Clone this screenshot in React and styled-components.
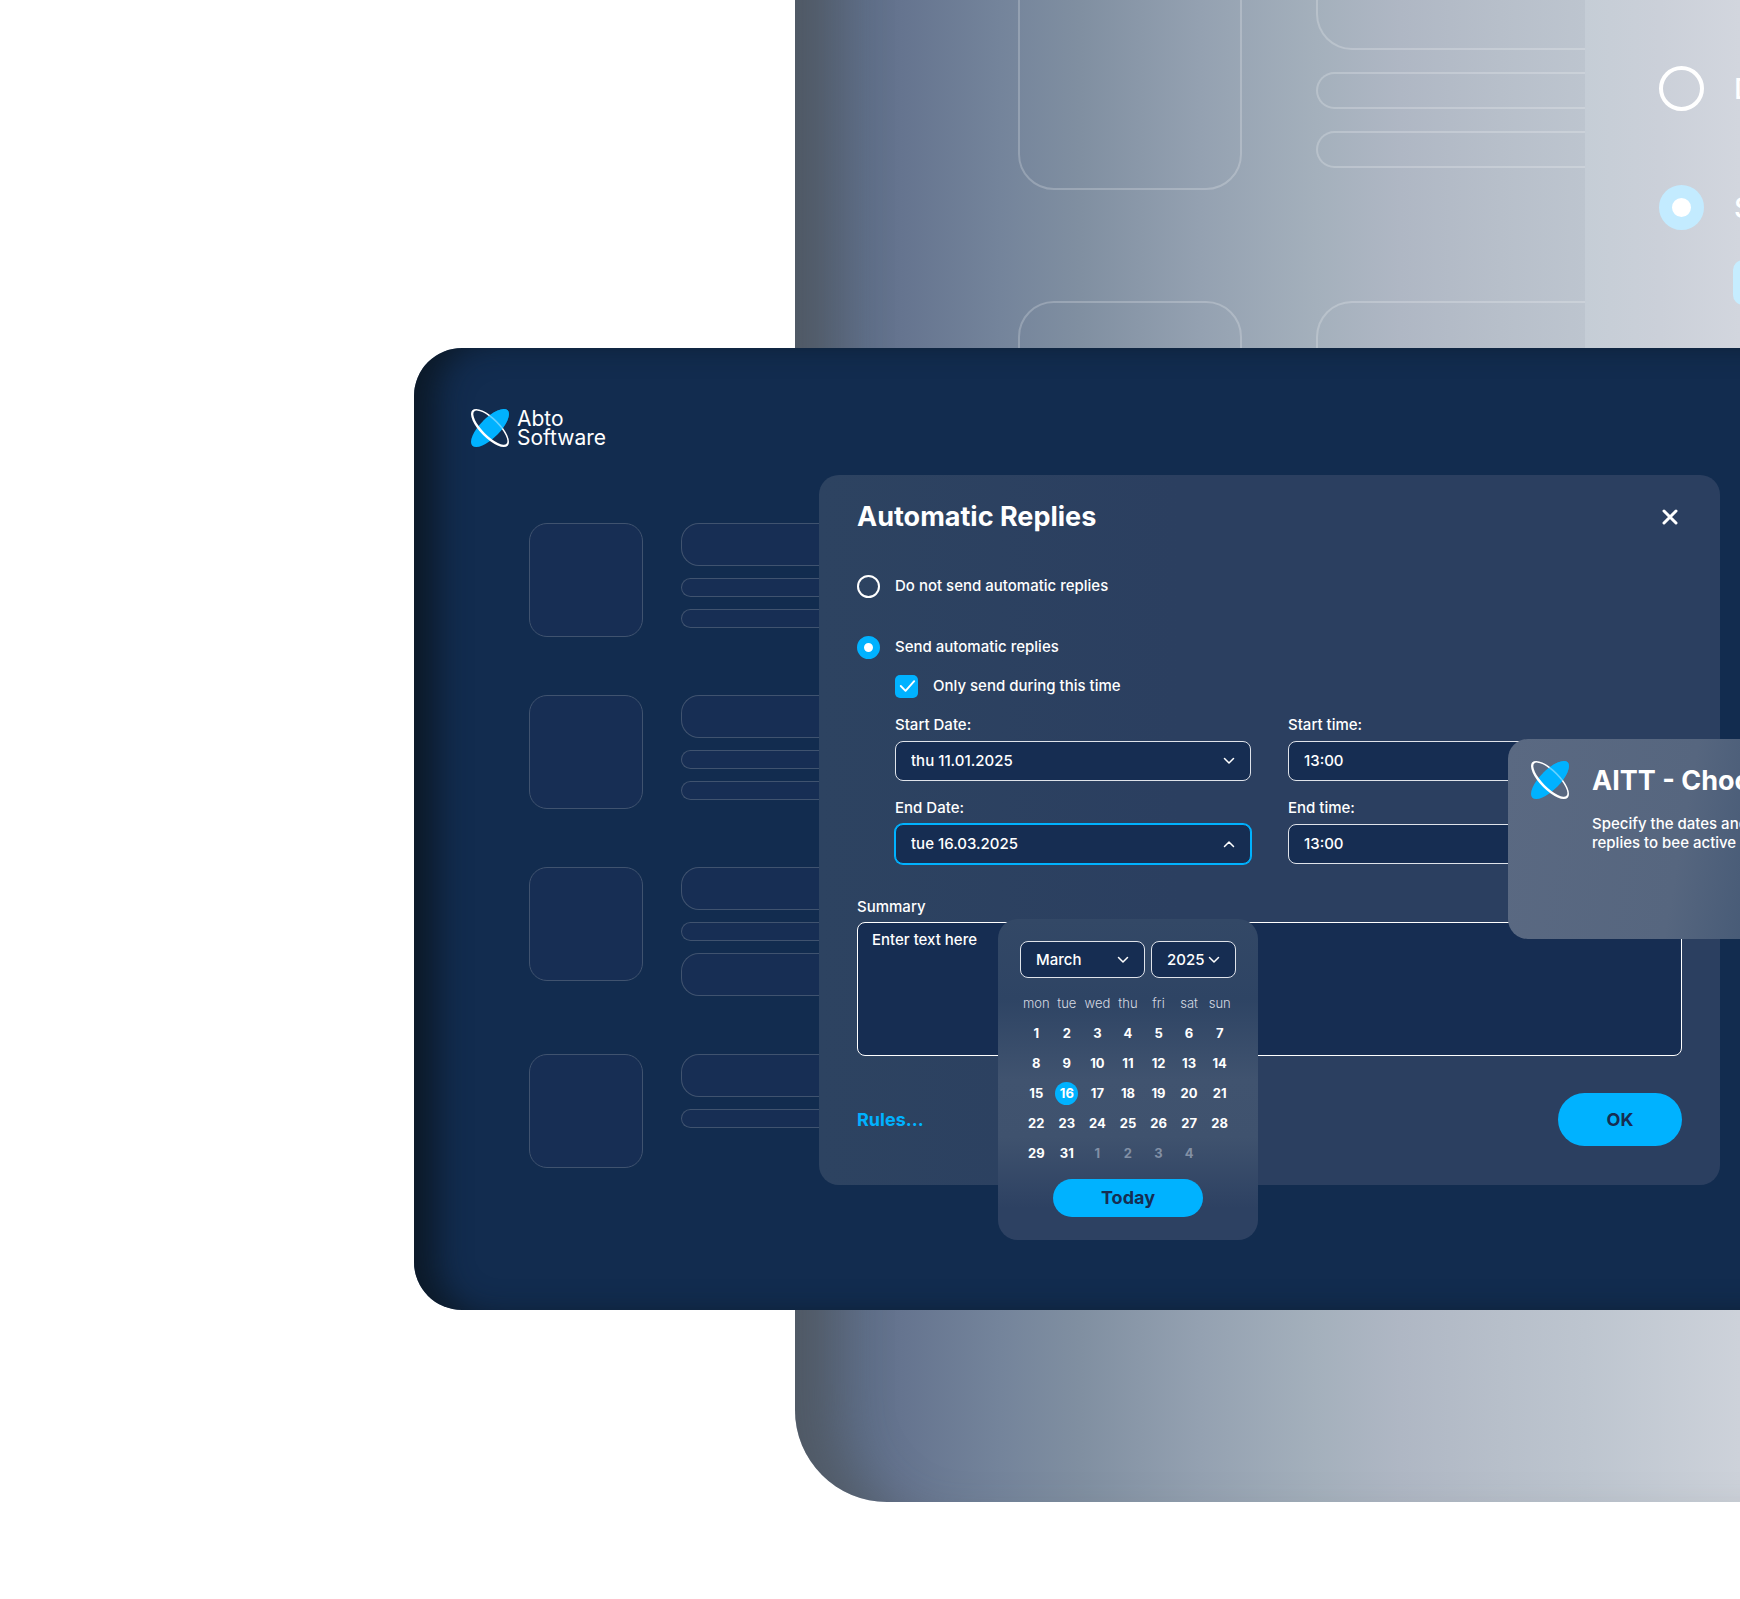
import { useId, useState } from 'react';
import styled, { createGlobalStyle, css } from 'styled-components';

const ROWS = [
  ['tall', 'thin', 'thin'],
  ['tall', 'thin', 'thin'],
  ['tall', 'thin', 'tall'],
  ['tall', 'thin'],
];

const WEEKDAYS = ['mon', 'tue', 'wed', 'thu', 'fri', 'sat', 'sun'];

const WEEKS = [
  [1, 2, 3, 4, 5, 6, 7],
  [8, 9, 10, 11, 12, 13, 14],
  [15, 16, 17, 18, 19, 20, 21],
  [22, 23, 24, 25, 26, 27, 28],
  [29, 31],
];

const NEXT_MONTH = [1, 2, 3, 4];

const LogoMark = () => {
  const clipId = useId();

  return (
    <Mark viewBox="0 0 38 38" aria-hidden="true">
      <clipPath id={clipId}>
        <path d="M0 0H38V38Z" />
      </clipPath>
      <ellipse cx="19" cy="19" rx="25" ry="9.8" transform="rotate(-45 19 19)" fill="#00b2ff" />
      <path
        transform="rotate(45 19 19)"
        fill="#fff"
        fillRule="evenodd"
        d="M-6 19a25 9.8 0 1 0 50 0a25 9.8 0 1 0 -50 0ZM-3.8 18.5a22.8 7.8 0 1 1 45.6 0a22.8 7.8 0 1 1 -45.6 0Z"
      />
      <g clipPath={`url(#${clipId})`}>
        <ellipse
          cx="19"
          cy="19"
          rx="25"
          ry="9.8"
          transform="rotate(-45 19 19)"
          fill="#00b2ff"
          opacity="0.6"
        />
      </g>
    </Mark>
  );
};

const Skeleton = ({ large }) => (
  <SkeletonList $large={large} aria-hidden="true">
    {ROWS.map((bars, index) => (
      <SkeletonRow key={index} $large={large}>
        <Thumb $large={large} />
        <Bars $large={large}>
          {bars.map((kind, i) => (
            <Bar key={i} $large={large} $tall={kind === 'tall'} />
          ))}
        </Bars>
      </SkeletonRow>
    ))}
  </SkeletonList>
);

const Check = ({ large, ...props }) => (
  <CheckWrap>
    <CheckInput type="checkbox" $large={large} {...props} />
    <CheckMark viewBox="0 0 24 24" $large={large} aria-hidden="true">
      <path d="M6 11.5L11 16.5L20 6.5" />
    </CheckMark>
  </CheckWrap>
);

const Select = ({ options, open, height, pad = 16, ...props }) => (
  <SelectWrap>
    <SelectInput $open={open} $height={height} {...props}>
      {options.map((option) => (
        <option key={option}>{option}</option>
      ))}
    </SelectInput>
    <Chevron viewBox="0 0 12 8" $pad={pad} aria-hidden="true">
      <path d={open ? 'M1.5 6.5L6 2L10.5 6.5' : 'M1.5 1.5L6 6L10.5 1.5'} />
    </Chevron>
  </SelectWrap>
);

const Calendar = () => {
  const [day, setDay] = useState(16);

  return (
    <CalendarBox>
      <CalendarHead>
        <Select aria-label="Month" options={['March']} height={37} />
        <Select aria-label="Year" options={['2025']} height={37} />
      </CalendarHead>
      <Days>
        <thead>
          <tr>
            {WEEKDAYS.map((name) => (
              <Weekday key={name}>{name}</Weekday>
            ))}
          </tr>
        </thead>
        <tbody>
          {WEEKS.map((week) => (
            <tr key={week[0]}>
              {week.map((n) => (
                <DayCell key={n}>
                  <Day type="button" $selected={n === day} onClick={() => setDay(n)}>
                    {n}
                  </Day>
                </DayCell>
              ))}
              {week.length < 7 &&
                NEXT_MONTH.map((n) => (
                  <DayCell key={`next-${n}`}>
                    <Day type="button" $muted>
                      {n}
                    </Day>
                  </DayCell>
                ))}
            </tr>
          ))}
        </tbody>
      </Days>
      <Today type="button" onClick={() => setDay(16)}>
        Today
      </Today>
    </CalendarBox>
  );
};

const BackWindow = () => (
  <BackFrame>
    <Skeleton large />
    <BackPanel>
      <BackOption>
        <RadioInput type="radio" name="back-replies" $large />
        Do not send automatic replies
      </BackOption>
      <BackOption>
        <RadioInput type="radio" name="back-replies" $large defaultChecked />
        Send automatic replies
      </BackOption>
      <BackOption $nested>
        <Check large defaultChecked />
        Only send during this time
      </BackOption>
    </BackPanel>
  </BackFrame>
);

const App = () => {
  const [mode, setMode] = useState('send');

  return (
    <Page>
      <GlobalStyle />
      <BackWindow />
      <FrontWindow>
        <Brand href="#">
          <LogoMark />
          <BrandName>
            Abto
            <br />
            Software
          </BrandName>
        </Brand>
        <Content>
          <Skeleton />
          <Dialog>
            <DialogHead>
              <Title>Automatic Replies</Title>
              <Close type="button" aria-label="Close">
                <svg viewBox="0 0 16 16" width="16" height="16">
                  <path d="M2 2L14 14M14 2L2 14" />
                </svg>
              </Close>
            </DialogHead>
            <Options>
              <Option>
                <RadioInput
                  type="radio"
                  name="replies"
                  checked={mode === 'none'}
                  onChange={() => setMode('none')}
                />
                Do not send automatic replies
              </Option>
              <Option>
                <RadioInput
                  type="radio"
                  name="replies"
                  checked={mode === 'send'}
                  onChange={() => setMode('send')}
                />
                Send automatic replies
              </Option>
            </Options>
            <Schedule>
              <Option>
                <Check defaultChecked />
                Only send during this time
              </Option>
              <Fields>
                <Field>
                  <Label htmlFor="start-date">Start Date:</Label>
                  <Select id="start-date" options={['thu 11.01.2025']} height={40} />
                </Field>
                <Field>
                  <Label htmlFor="start-time">Start time:</Label>
                  <Select id="start-time" options={['13:00']} height={40} />
                </Field>
                <Field>
                  <Label htmlFor="end-date">End Date:</Label>
                  <Select id="end-date" options={['tue 16.03.2025']} height={40} open />
                  <Calendar />
                </Field>
                <Field>
                  <Label htmlFor="end-time">End time:</Label>
                  <Select id="end-time" options={['13:00']} height={40} />
                </Field>
              </Fields>
            </Schedule>
            <Summary>
              <Label htmlFor="summary">Summary</Label>
              <TextArea id="summary" placeholder="Enter text here" />
            </Summary>
            <DialogFoot>
              <Rules href="#">Rules...</Rules>
              <Ok type="button">OK</Ok>
            </DialogFoot>
            <Hint>
              <LogoMark />
              <HintBody>
                <Title as="h2">AITT - Choose</Title>
                <HintText>
                  Specify the dates and
                  <br />
                  replies to bee active
                </HintText>
              </HintBody>
            </Hint>
          </Dialog>
        </Content>
      </FrontWindow>
    </Page>
  );
};

const GlobalStyle = createGlobalStyle`
  * {
    box-sizing: border-box;
  }

  body {
    margin: 0;
    background: #fff;
    color: #fff;
    font-family: Inter, 'Liberation Sans', sans-serif;
    font-size: 15px;
    font-weight: 500;
    line-height: 20px;
  }

  button,
  select,
  textarea {
    font: inherit;
    color: inherit;
  }
`;

const Page = styled.main`
  position: relative;
  min-height: 100vh;
  padding: 348px 0 97px 414px;
  overflow: hidden;
`;

const BackFrame = styled.div`
  position: absolute;
  top: -377px;
  bottom: 97px;
  left: 795px;
  right: -160px;
  display: flex;
  align-items: flex-start;
  padding: 249px 0 0 223px;
  border-radius: 0 0 0 92px;
  background: linear-gradient(
    90deg,
    #58677f 0,
    #5f6f89 70px,
    #65748f 105px,
    #74849b 205px,
    #808fa1 285px,
    #94a1b1 405px,
    #a4b0bc 521px,
    #afb7c4 605px,
    #b7bfca 705px,
    #bdc5cf 790px,
    #cdd2da 945px
  );
  box-shadow: inset 70px 0 50px -30px rgba(72, 76, 76, 0.5);
`;

const BackPanel = styled.div`
  flex: 1;
  display: flex;
  flex-direction: column;
  align-self: flex-start;
  height: 1380px;
  padding: 194px 0 0 74px;
  background: linear-gradient(90deg, #c5cdd6, #cbd0d9 75px, #d2d6de 155px);
`;

const BackOption = styled.label`
  display: flex;
  align-items: center;
  gap: 30px;
  margin: ${(props) => (props.$nested ? '-44px 0 0 74px' : '0 0 74px')};
  font-size: 29px;
  line-height: 45px;
  white-space: nowrap;
`;

const FrontWindow = styled.section`
  position: relative;
  margin-right: -60px;
  padding: 61px 80px 125px 57px;
  border-radius: 48px;
  background: #122c4f;
  box-shadow: inset 30px 0 32px -8px rgba(11, 23, 36, 0.9);
`;

const Brand = styled.a`
  display: flex;
  align-items: center;
  gap: 8px;
  width: fit-content;
  height: 38px;
  color: #fff;
  text-decoration: none;
`;

const Mark = styled.svg`
  flex: none;
  width: 38px;
  height: 38px;
`;

const BrandName = styled.span`
  font-size: 21px;
  font-weight: 400;
  line-height: 19px;
`;

const Content = styled.div`
  display: flex;
  align-items: flex-start;
  margin-top: 28px;
  padding-left: 58px;
`;

const SkeletonList = styled.div`
  flex: none;
  display: flex;
  flex-direction: column;
  gap: ${(props) => (props.$large ? '111px' : '58px')};
  width: ${(props) => (props.$large ? '567px' : '290px')};
  padding-top: ${(props) => (props.$large ? '94px' : '48px')};
  overflow: hidden;
`;

const SkeletonRow = styled.div`
  display: flex;
  align-items: flex-start;
  gap: ${(props) => (props.$large ? '74px' : '38px')};
`;

const outline = css`
  border: ${(props) =>
    props.$large ? '2px solid rgba(255, 255, 255, 0.22)' : '1px solid #40536f'};
  background: ${(props) => (props.$large ? 'transparent' : '#172e54')};
`;

const Thumb = styled.div`
  ${outline}
  flex: none;
  width: ${(props) => (props.$large ? '224px' : '114px')};
  height: ${(props) => (props.$large ? '224px' : '114px')};
  border-radius: ${(props) => (props.$large ? '36px' : '18px')};
`;

const Bars = styled.div`
  flex: 1;
  display: flex;
  flex-direction: column;
  gap: ${(props) => (props.$large ? '22px' : '12px')};
`;

const Bar = styled.div`
  ${outline}
  height: ${(props) =>
    props.$large ? (props.$tall ? '84px' : '37px') : props.$tall ? '43px' : '19px'};
  border-right: 0;
  border-radius: ${(props) => (props.$large ? '36px 0 0 36px' : '18px 0 0 18px')};
`;

const Dialog = styled.form`
  position: relative;
  flex: 1;
  padding: 26px 38px 39px;
  border-radius: 20px;
  background: linear-gradient(90deg, #2d4361, #2b3f60 40%, #2b3f60);
`;

const DialogHead = styled.header`
  display: flex;
  align-items: center;
  justify-content: space-between;
`;

const Title = styled.h1`
  margin: 0;
  font-size: 27px;
  font-weight: 700;
  line-height: 32px;
  white-space: nowrap;
`;

const Close = styled.button`
  display: flex;
  padding: 4px;
  border: 0;
  background: none;
  cursor: pointer;

  path {
    stroke: #fff;
    stroke-width: 3;
    stroke-linecap: round;
  }
`;

const Options = styled.div`
  display: flex;
  flex-direction: column;
  gap: 37px;
  margin-top: 41px;
`;

const Option = styled.label`
  display: flex;
  align-items: center;
  gap: 15px;
  height: 24px;
`;

const RadioInput = styled.input`
  flex: none;
  appearance: none;
  width: ${(props) => (props.$large ? '45px' : '23px')};
  height: ${(props) => (props.$large ? '45px' : '23px')};
  margin: 0;
  border: ${(props) => (props.$large ? '4px' : '2px')} solid #fff;
  border-radius: 50%;

  &:checked {
    border-width: ${(props) => (props.$large ? '13px' : '7px')};
    border-color: ${(props) => (props.$large ? '#c3ebff' : '#00b2ff')};
    background: #fff;
  }
`;

const CheckWrap = styled.span`
  flex: none;
  display: grid;

  > * {
    grid-area: 1 / 1;
  }
`;

const CheckInput = styled.input`
  appearance: none;
  width: ${(props) => (props.$large ? '45px' : '23px')};
  height: ${(props) => (props.$large ? '45px' : '23px')};
  margin: 0;
  border-radius: ${(props) => (props.$large ? '10px' : '5px')};
  background: ${(props) => (props.$large ? '#c6edff' : '#00b2ff')};
`;

const CheckMark = styled.svg`
  width: ${(props) => (props.$large ? '45px' : '23px')};
  height: ${(props) => (props.$large ? '45px' : '23px')};
  fill: none;
  stroke: #fff;
  stroke-width: 2;
  stroke-linecap: round;
  stroke-linejoin: round;
  pointer-events: none;
`;

const Schedule = styled.div`
  margin-top: 15px;
  padding-left: 38px;
`;

const Fields = styled.div`
  display: grid;
  grid-template-columns: 356px 1fr;
  gap: 17px 37px;
  margin-top: 17px;
`;

const Field = styled.div`
  position: relative;
  display: flex;
  flex-direction: column;
  gap: 6px;
`;

const Label = styled.label`
  align-self: flex-start;
`;

const SelectWrap = styled.div`
  position: relative;
`;

const SelectInput = styled.select`
  appearance: none;
  display: block;
  width: 100%;
  height: ${(props) => props.$height}px;
  padding: 0 0 0 15px;
  border: 1px solid ${(props) => (props.$open ? '#00b2ff' : '#dfe3ea')};
  border-radius: 8px;
  outline: none;
  background: #162d52;
  box-shadow: ${(props) => (props.$open ? '0 0 0 1px #00b2ff' : 'none')};
`;

const Chevron = styled.svg`
  position: absolute;
  top: calc(50% - 4px);
  right: ${(props) => props.$pad}px;
  width: 12px;
  height: 8px;
  fill: none;
  stroke: #fff;
  stroke-width: 1.5;
  stroke-linecap: round;
  stroke-linejoin: round;
  pointer-events: none;
`;

const Summary = styled.div`
  display: flex;
  flex-direction: column;
  gap: 5px;
  margin-top: 33px;
`;

const TextArea = styled.textarea`
  display: block;
  width: 100%;
  height: 134px;
  padding: 7px 14px;
  border: 1px solid #fff;
  border-radius: 8px;
  outline: none;
  resize: none;
  background: #162d52;

  &::placeholder {
    color: #fff;
    opacity: 1;
  }
`;

const DialogFoot = styled.footer`
  display: flex;
  align-items: center;
  justify-content: space-between;
  margin-top: 37px;
`;

const Rules = styled.a`
  color: #00b2ff;
  font-size: 18px;
  font-weight: 700;
  text-decoration: none;
`;

const pill = css`
  padding: 0;
  border: 0;
  border-radius: 27px;
  background: #00b2ff;
  color: #162d52;
  font-size: 18px;
  font-weight: 700;
  cursor: pointer;
`;

const Ok = styled.button`
  ${pill}
  width: 124px;
  height: 53px;
`;

const CalendarBox = styled.div`
  position: absolute;
  z-index: 1;
  top: calc(100% + 55px);
  left: 103px;
  display: flex;
  flex-direction: column;
  align-items: center;
  width: 260px;
  padding: 22px 22px 23px;
  border-radius: 20px;
  background: linear-gradient(#334866, #2e4464 25%, #40536f 50%, #3f526e 68%, #2d4162 90%);
`;

const CalendarHead = styled.div`
  display: grid;
  grid-template-columns: 125px 85px;
  gap: 6px;
`;

const Days = styled.table`
  width: 214px;
  margin: 9px 0 11px;
  border-collapse: collapse;
  table-layout: fixed;
`;

const Weekday = styled.th`
  height: 31px;
  padding: 0;
  color: #d5dae2;
  font-size: 13px;
  font-weight: 300;
`;

const DayCell = styled.td`
  height: 30px;
  padding: 0;
  text-align: center;
`;

const Day = styled.button`
  display: block;
  width: 23px;
  height: 23px;
  margin: 0 auto;
  padding: 0;
  border: 0;
  border-radius: 50%;
  background: ${(props) => (props.$selected ? '#00b2ff' : 'none')};
  color: ${(props) => (props.$muted ? '#8290a5' : '#fff')};
  font-size: 13px;
  font-weight: 700;
  cursor: pointer;
`;

const Today = styled.button`
  ${pill}
  width: 150px;
  height: 38px;
`;

const Hint = styled.aside`
  position: absolute;
  top: 264px;
  right: -100px;
  display: flex;
  align-items: flex-start;
  gap: 23px;
  width: 312px;
  height: 200px;
  padding: 22px 0 0 23px;
  border-radius: 20px;
  background: linear-gradient(100deg, #5a6982, #56667f 55%, #465a76 80%);
`;

const HintBody = styled.div`
  padding-top: 4px;
`;

const HintText = styled.p`
  margin: 17px 0 0;
  line-height: 19px;
  white-space: nowrap;
`;

export default App;
